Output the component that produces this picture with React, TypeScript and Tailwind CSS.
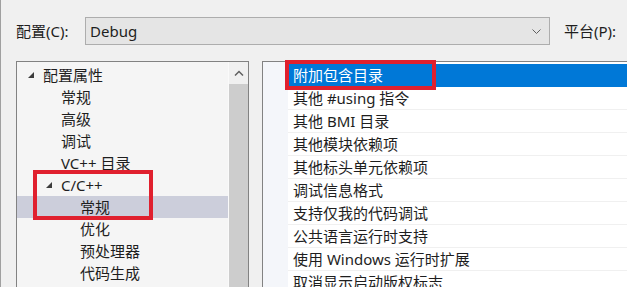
import React from 'react';

const font = { fontFamily: '"Noto Sans", "Noto Sans CJK SC", sans-serif' };

const tree = [
  { text: '配置属性', level: 0, open: true },
  { text: '常规', level: 1 },
  { text: '高级', level: 1 },
  { text: '调试', level: 1 },
  { text: 'VC++ 目录', level: 1 },
  { text: 'C/C++', level: 1, open: true },
  { text: '常规', level: 2, selected: true },
  { text: '优化', level: 2 },
  { text: '预处理器', level: 2 },
  { text: '代码生成', level: 2 },
];

const props = [
  '附加包含目录',
  '其他 #using 指令',
  '其他 BMI 目录',
  '其他模块依赖项',
  '其他标头单元依赖项',
  '调试信息格式',
  '支持仅我的代码调试',
  '公共语言运行时支持',
  '使用 Windows 运行时扩展',
  '取消显示启动版权标志',
];

function Expander() {
  return (
    <svg width="8" height="8" viewBox="0 0 8 8" className="shrink-0">
      <polygon points="7,1 7,7 1,7" fill="#3c3c3c" />
    </svg>
  );
}

export default function App() {
  return (
    <div className="relative w-[627px] h-[287px] overflow-hidden bg-[#f0f0f0] border-l border-[#a0a0a0] text-[#1e1e1e]" style={font}>
      {/* config row */}
      <div className="flex items-center pt-[17px] pl-[15px]">
        <span className="w-[69px] text-[15px] leading-[28px]">配置(C):</span>
        <div className="w-[465px] h-[28px] flex items-center justify-between border border-[#adadad] bg-[#e5e5e5] pl-[4px] pr-[8px]">
          <span className="text-[15px]">Debug</span>
          <svg width="9" height="5" viewBox="0 0 9 5">
            <polyline points="0.5,0.5 4.5,4.5 8.5,0.5" fill="none" stroke="#606060" strokeWidth="1" />
          </svg>
        </div>
        <span className="ml-[14px] text-[15px] whitespace-nowrap">平台(P):</span>
      </div>

      <div className="flex mt-[16px] pl-[15px]">
        {/* tree */}
        <div className="w-[233px] h-[240px] flex border border-[#828282] bg-[#f5f5f5]">
          <div className="flex-1 pt-[2px]">
            {tree.map((n, i) => (
              <div
                key={i}
                className={`h-[22px] flex items-center text-[15px] ${n.selected ? 'bg-[#cccedb]' : ''} ${
                  n.level === 0 ? 'pl-[10px]' : n.level === 1 ? (n.open ? 'pl-[28px]' : 'pl-[44px]') : 'pl-[63px]'
                }`}
              >
                {n.open && <Expander />}
                <span className={n.open ? 'ml-[8px]' : ''}>{n.text}</span>
              </div>
            ))}
          </div>
          <div className="w-[20px] bg-[#f0f0f0] border-l border-[#fafafa] flex flex-col">
            <div className="h-[22px] flex items-center justify-center">
              <svg width="10" height="6" viewBox="0 0 10 6">
                <polyline points="1,5.5 5,1.5 9,5.5" fill="none" stroke="#606060" strokeWidth="1.5" />
              </svg>
            </div>
            <div className="flex-1 bg-[#cdcdcd]" />
          </div>
        </div>

        {/* property grid */}
        <div className="ml-[13px] flex-1 h-[240px] flex border-l border-t border-[#828282] bg-[#f4f6fa]">
          <div className="w-[25px] shrink-0" />
          <div className="flex-1 bg-white pt-[2px]">
            {props.map((p, i) => (
              <div
                key={i}
                className={`h-[23px] flex items-center pl-[5px] text-[15px] border-b ${
                  i === 0 ? 'bg-[#0078d7] text-white border-[#0078d7]' : 'border-[#f0f0f0]'
                }`}
              >
                {p}
              </div>
            ))}
          </div>
        </div>
      </div>

      {/* annotation boxes */}
      <div className="absolute left-[32px] top-[170px] w-[120px] h-[50px] border-4 border-[#e0202e]" />
      <div className="absolute left-[284px] top-[60px] w-[151px] h-[30px] border-4 border-[#e0202e]" />
    </div>
  );
}
